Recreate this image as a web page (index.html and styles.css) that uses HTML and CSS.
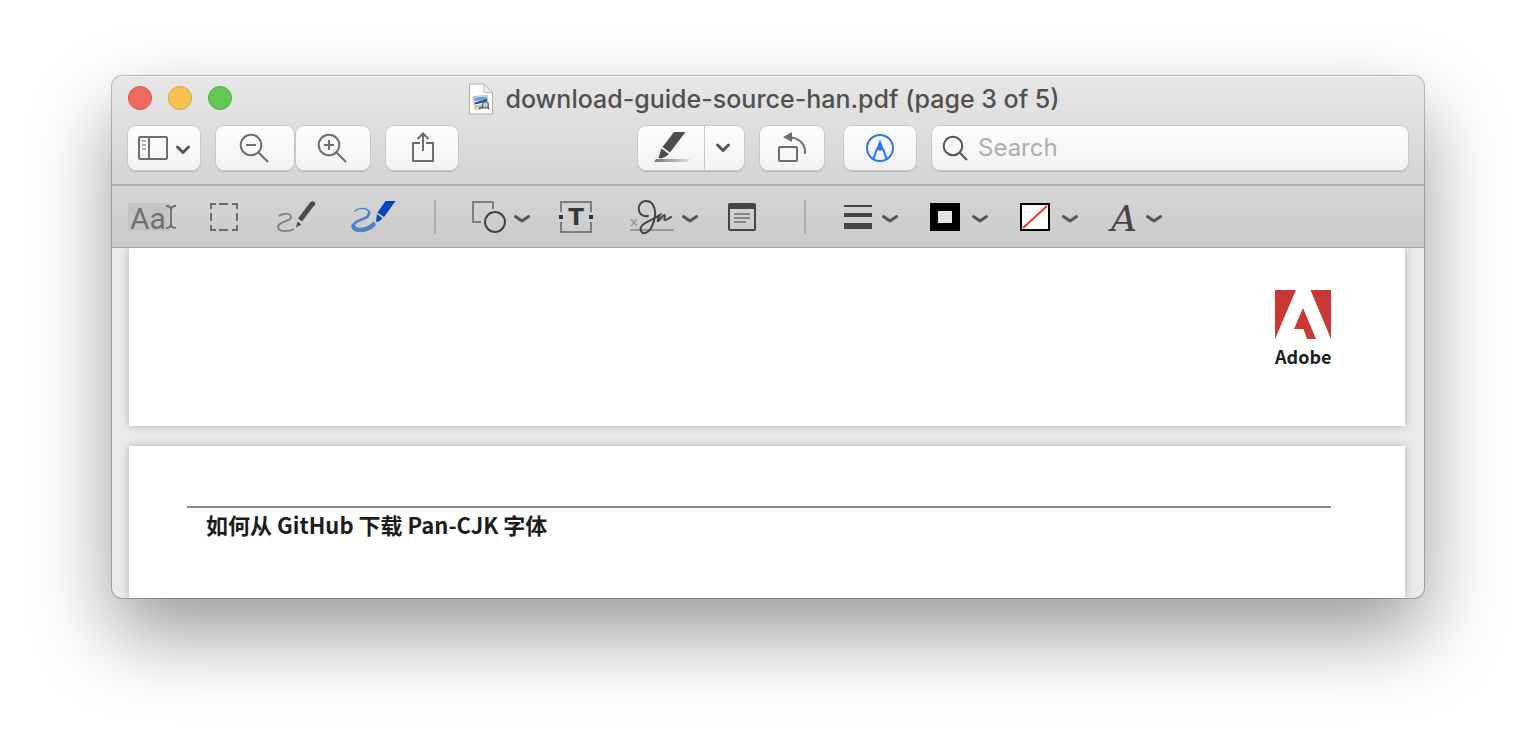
FILE: index.html
```html
<!DOCTYPE html>
<html lang="en">
<head>
<meta charset="utf-8">
<title>download-guide-source-han.pdf</title>
<link rel="stylesheet" href="styles.css">
</head>
<body>
<main class="window">
  <header class="header">
    <div class="titlebar">
      <div class="lights">
        <button class="light light-close" aria-label="Close"></button>
        <button class="light light-min" aria-label="Minimize"></button>
        <button class="light light-zoom" aria-label="Zoom"></button>
      </div>
      <h1 class="title">
        <svg width="26" height="32" viewBox="0 0 26 32" aria-hidden="true">
          <path d="M1.500 1H16L24.500 9.500V31H1.500Z" fill="#fff" stroke="#aeaeae"/>
          <path d="M16 1V9.500H24.500Z" fill="#eee" stroke="#bbb"/>
          <path d="M5 13.500L19 12.500L20.500 25L7 26.500Z" fill="#f6f6f2" stroke="#c9a97d" stroke-width=".8"/>
          <path d="M6 14.500L18.500 13.500L19 17L6.500 18Z" fill="#6d9fe4"/>
          <path d="M6.500 19.500L19 16V18.500L7 21.500Z" fill="#1f4c9b"/>
          <path d="M7 22.500L18 20.500V24L7 25.500Z" fill="#c9c4b4"/>
          <circle cx="17.500" cy="22" r="3" fill="#c3cad0" stroke="#6b7177" stroke-width="1.200"/>
          <path d="M11 25.500L15 24M19.500 24L21 26" stroke="#555" stroke-width="1.500"/>
        </svg>
        <span>download-guide-source-han.pdf (page 3 of 5)</span>
      </h1>
    </div>
    <div class="toolbar">
      <button class="btn btn-side" aria-label="Sidebar view">
        <svg width="74" height="46" viewBox="127 125 74 46">
          <g fill="none" stroke="#6e6e6e" stroke-width="2"><rect x="139" y="137" width="28" height="22" rx="1"/><path d="M149 137V159"/></g>
          <path d="M142 141H146M142 145H146M142 149H146" stroke="#999" stroke-width="1.500"/>
          <path d="M177.500 147L183 152.500L188.500 147" class="chev"/>
        </svg>
      </button>
      <div class="pair">
        <button class="btn btn-out" aria-label="Zoom out">
          <svg width="80" height="46" viewBox="215 125 80 46" fill="none" stroke="#6e6e6e" stroke-width="2"><circle cx="251" cy="145" r="10.300"/><path d="M246 145H256M258.500 152.500L268 162"/></svg>
        </button>
        <button class="btn btn-in" aria-label="Zoom in">
          <svg width="76" height="46" viewBox="295 125 76 46" fill="none" stroke="#6e6e6e" stroke-width="2"><circle cx="329" cy="145" r="10.300"/><path d="M324 145H334M329 140V150M336.500 152.500L346 162"/></svg>
        </button>
      </div>
      <button class="btn" aria-label="Share">
        <svg width="74" height="46" viewBox="385 125 74 46" fill="none" stroke="#6e6e6e" stroke-width="2"><path d="M420 143H413V161H433V143H426M423 151V134M417.500 139L423 133.500L428.500 139"/></svg>
      </button>
      <div class="spacer"></div>
      <div class="split">
        <button class="split-main" aria-label="Highlight">
          <svg width="66" height="46" viewBox="638 125 66 46">
            <defs><linearGradient id="hl"><stop stop-color="#777"/><stop offset="1" stop-color="#ddd"/></linearGradient></defs>
            <path d="M656 159H690L687 162H654Z" fill="url(#hl)"/>
            <path d="M674 132H685.500L670 152.500L662.500 147Z" fill="#4d4d4d"/>
            <path d="M661.500 148.500L669 154L666 156.500L661 158.500L658.500 158Z" fill="#4d4d4d"/>
          </svg>
        </button>
        <button class="split-menu" aria-label="Highlight colors">
          <svg width="39" height="46" viewBox="705 125 39 46"><path d="M717.500 145L723 150.500L728.500 145" class="chev"/></svg>
        </button>
      </div>
      <button class="btn" aria-label="Rotate">
        <svg width="66" height="46" viewBox="759 125 66 46"><path d="M789 137.500C799 137.500 806 144 805 154" fill="none" stroke="#6e6e6e" stroke-width="2"/><rect x="779" y="147" width="18" height="14" rx="1" fill="none" stroke="#6e6e6e" stroke-width="2"/><path d="M783 137L792 132V142Z" fill="#6e6e6e"/></svg>
      </button>
      <button class="btn btn-markup" aria-label="Markup" aria-pressed="true">
        <svg width="74" height="46" viewBox="843 125 74 46"><g fill="none" stroke="#2a76f6" stroke-width="2"><circle cx="880" cy="148" r="13"/><path d="M873.500 159L877 148.500M883 148.500L886.500 159"/></g><path d="M880 139.500L884.500 151Q882 149 880 151Q878 149 875.500 151Z" fill="#2a76f6"/></svg>
      </button>
      <label class="search">
        <svg width="26" height="26" viewBox="942 136 26 26" fill="none" stroke="#555" stroke-width="2" aria-hidden="true"><circle cx="953" cy="147" r="9.300"/><path d="M959.500 153.500L967 161"/></svg>
        <input type="search" placeholder="Search" aria-label="Search">
      </label>
    </div>
  </header>

  <nav class="markup" aria-label="Markup tools">
    <button class="tool" aria-label="Text selection">
      <svg width="64" height="61" viewBox="128 186 64 61"><path d="M128 203H170V231H128Z" fill="#c4c4c4"/><text x="130" y="229" class="aa">Aa</text><path d="M166 206Q171 206 171 210V224Q171 228 166 228M176 206Q171 206 171 210V224Q171 228 176 228" fill="none" stroke="#6d6d6d" stroke-width="1.800"/></svg>
    </button>
    <button class="tool" aria-label="Rectangular selection">
      <svg width="64" height="61" viewBox="192 186 64 61"><path d="M211 209V204H216M219 204H228M232 204H237V209M237 213V221M237 225V230H232M228 230H219M216 230H211V225M211 221V213" fill="none" stroke="#6d6d6d" stroke-width="2"/></svg>
    </button>
    <button class="tool" aria-label="Sketch">
      <svg width="78" height="61" viewBox="256 186 78 61"><path d="M279 216C283 213 291 213 291 217C291 222 278 221 278 227C278 232 289 232 294 229" fill="none" stroke="#838383" stroke-width="2"/><path d="M300 220L312.500 203.500" stroke="#4b4b4b" stroke-width="5"/><circle cx="312.700" cy="203.700" r="2.500" fill="#4b4b4b"/><path d="M297.500 221.500L301.500 224.500L296 227.500Z" fill="#4b4b4b"/></svg>
    </button>
    <button class="tool" aria-label="Draw">
      <svg width="80" height="61" viewBox="334 186 80 61"><g fill="none" stroke="#4f7fca" stroke-linecap="round"><path d="M355 211C360 207 368 208 369 212" stroke-width="1.300"/><path d="M369 212C371 220 353 219 353 226.500" stroke-width="2.500"/><path d="M353.500 226C353.500 231 366 232 373.500 224.500" stroke-width="4.500"/></g><path d="M385.500 201H395.500L384 217L377.500 212.500Z" fill="#0047c6"/><path d="M377 214L382.500 218.500L379.500 221L376 222Z" fill="#0047c6"/></svg>
    </button>
    <span class="sep"></span>
    <button class="tool" aria-label="Shapes">
      <svg width="90" height="61" viewBox="456 186 90 61" fill="none"><path d="M493 209V202H473V222H481" stroke="#7e7e7e" stroke-width="2"/><circle cx="495" cy="222" r="10" stroke="#444" stroke-width="2"/><path d="M515.500 216.500L522 221L528.500 216.500" class="chev"/></svg>
    </button>
    <button class="tool" aria-label="Text">
      <svg width="60" height="61" viewBox="546 186 60 61"><path d="M561 212V202H591V212M591 222V232H561V222" fill="none" stroke="#7e7e7e" stroke-width="2"/><path d="M559 215H563V219H559ZM589 215H593V219H589Z" fill="#333"/><text x="576" y="225" class="tee">T</text></svg>
    </button>
    <button class="tool" aria-label="Sign">
      <svg width="106" height="61" viewBox="606 186 106 61" fill="none"><path d="M630 230H674" stroke="#999" stroke-width="2"/><path d="M631 219L637 226M637 219L631 226" stroke="#999" stroke-width="1.500"/><path d="M648 216C636 218 636 201 646 201C655 201 658 214 652 226C649 233 643 235 641 231C638 225 649 221 655 218C658 216 660 215 660 215C659 217 657 221 658 221C661 220 662 215 664.500 215C666 216 663 220 665 220C667 220 669 218 671 217" stroke="#444" stroke-width="2" stroke-linecap="round"/><path d="M683.500 216.500L690 221L696.500 216.500" class="chev"/></svg>
    </button>
    <button class="tool" aria-label="Note">
      <svg width="60" height="61" viewBox="712 186 60 61"><rect x="729" y="204" width="26" height="26" rx="1" fill="none" stroke="#444" stroke-width="2"/><path d="M729 204H755V209H729Z" fill="#444"/><path d="M734 214H750M734 218H750M734 222H746" stroke="#858585" stroke-width="2"/></svg>
    </button>
    <span class="sep sep-wide"></span>
    <button class="tool" aria-label="Shape style">
      <svg width="76" height="61" viewBox="838 186 76 61" fill="none"><path d="M844 205H872V207H844ZM844 213H872V217H844ZM844 223H872V229H844Z" fill="#444"/><path d="M883.500 216.500L890 221L896.500 216.500" class="chev"/></svg>
    </button>
    <button class="tool" aria-label="Border color">
      <svg width="90" height="61" viewBox="914 186 90 61" fill="none"><path d="M930 203H960V231H930ZM938 211V223H952V211Z" fill="#000" fill-rule="evenodd"/><path d="M938 211H952V223H938Z" fill="#e4e4e4"/><path d="M973.500 216.500L980 221L986.500 216.500" class="chev"/></svg>
    </button>
    <button class="tool" aria-label="Fill color">
      <svg width="90" height="61" viewBox="1004 186 90 61" fill="none"><rect x="1021" y="204" width="28" height="26" fill="#fff" stroke="#000" stroke-width="2"/><path d="M1023 228L1047 206" stroke="#f03a28" stroke-width="2"/><path d="M1063.500 216.500L1070 221L1076.500 216.500" class="chev"/></svg>
    </button>
    <button class="tool" aria-label="Text style">
      <svg width="86" height="61" viewBox="1094 186 86 61" fill="none"><text x="1111" y="231" class="ay">A</text><path d="M1147.500 216.500L1154 221L1160.500 216.500" class="chev"/></svg>
    </button>
  </nav>

  <section class="pages">
    <article class="page page-first">
      <div class="brand">
        <svg width="56" height="49" viewBox="0 0 56 49" aria-hidden="true"><path d="M0 0H21L0 49ZM35.500 0H56V49ZM28 18L41 49H32L28.500 39H19Z" fill="#c93833"/></svg>
        <span class="brand-name">Adobe</span>
      </div>
    </article>
    <article class="page page-second">
      <h2 class="heading" lang="zh-CN">如何从 GitHub 下载 Pan-CJK 字体</h2>
    </article>
  </section>
</main>
</body>
</html>
```
FILE: styles.css
```css
* { box-sizing: border-box; }

body {
  min-height: 100vh;
  margin: 0;
  padding: 76px 112px;
  background: #fff;
  font-family: Inter, "Liberation Sans", sans-serif;
}

button {
  margin: 0;
  padding: 0;
  border: 0;
  background: none;
  font: inherit;
}

svg { display: block; flex: none; }

.window {
  overflow: hidden;
  border-radius: 10px;
  background: #eaeaea;
  box-shadow: 0 0 0 1px rgba(0, 0, 0, .24), 0 36px 80px rgba(0, 0, 0, .4);
}

.header {
  height: 110px;
  border-bottom: 2px solid #b3b3b3;
  background: linear-gradient(#e7e7e7, #d4d4d4);
  box-shadow: inset 0 1px #f4f4f4;
}

.titlebar {
  display: grid;
  grid-template-columns: 1fr auto 1fr;
  align-items: center;
  height: 49px;
  padding: 0 16px;
}

.lights { display: flex; gap: 16px; padding-bottom: 5px; }

.light {
  width: 24px;
  height: 24px;
  border: 1px solid;
  border-radius: 50%;
}
.light-close { background: #ed6b60; border-color: #d65549; }
.light-min { background: #f6c151; border-color: #d9a33f; }
.light-zoom { background: #62c756; border-color: #4fae42; }

.title {
  display: flex;
  align-items: center;
  gap: 11px;
  margin: 0;
  padding: 0 8px 4px 0;
  color: #505050;
  font-size: 25px;
  font-weight: 500;
  line-height: 32px;
  white-space: nowrap;
}

.toolbar {
  display: flex;
  gap: 14px;
  padding: 0 15px;
}

.btn, .split, .search {
  height: 46px;
  border-radius: 9px;
  background: linear-gradient(#fefefe, #f2f2f2);
  box-shadow: inset 0 0 0 1px #c6c6c6, 0 1px #b4b4b4;
}
.btn { flex: none; }
.btn-markup { margin-left: 4px; }
.pair { display: flex; }
.spacer { flex: 150 1 150px; }

.split { display: flex; padding: 0 1px; }
.split-main { border-right: 1px solid #c9c9c9; }

.search {
  display: flex;
  flex: 478 1 478px;
  align-items: center;
  gap: 10px;
  padding: 0 11px;
}
.search input {
  flex: 1;
  min-width: 0;
  padding: 0;
  border: 0;
  outline: 0;
  background: none;
  color: #444;
  font: 24px/30px Inter, "Liberation Sans", sans-serif;
}
.search input::placeholder { color: #adadad; opacity: 1; }

.chev {
  fill: none;
  stroke: #555;
  stroke-width: 3;
  stroke-linecap: round;
  stroke-linejoin: round;
}

.markup {
  display: flex;
  height: 62px;
  padding-left: 16px;
  border-bottom: 1px solid #a2a2a2;
  background: linear-gradient(#d6d6d6, #cacaca);
}
.tool { flex: none; }

.sep {
  flex: none;
  align-self: center;
  width: 2px;
  height: 34px;
  margin: 0 20px;
  background: #adadad;
}
.sep-wide { margin: 0 32px; }

.aa { fill: #707070; font: 30px Roboto, sans-serif; }
.tee { fill: #383838; font: bold 23px "DejaVu Sans", sans-serif; text-anchor: middle; }
.ay { fill: #444; font: italic 36px "DejaVu Serif", serif; }

.pages {
  display: flex;
  flex-direction: column;
  gap: 20px;
  padding: 0 19px 0 17px;
  overflow: hidden;
}

.page {
  padding: 60px 74px 0 58px;
  background: #fff;
  box-shadow: 0 0 8px rgba(0, 0, 0, .24);
}

.page-first {
  display: flex;
  justify-content: flex-end;
  padding-top: 42px;
  padding-bottom: 53px;
}

.brand-name {
  display: block;
  color: #1d1d1d;
  font: bold 18px/34px "Noto Sans CJK SC", sans-serif;
  text-align: center;
}

.brand { width: 56px; }

.page-second { padding-bottom: 58px; }

.heading {
  margin: 0;
  padding: 0 19px;
  border-top: 2px solid #8b8b8b;
  color: #1d1d1d;
  font: bold 22px/32px "Noto Sans CJK SC", sans-serif;
}
```
